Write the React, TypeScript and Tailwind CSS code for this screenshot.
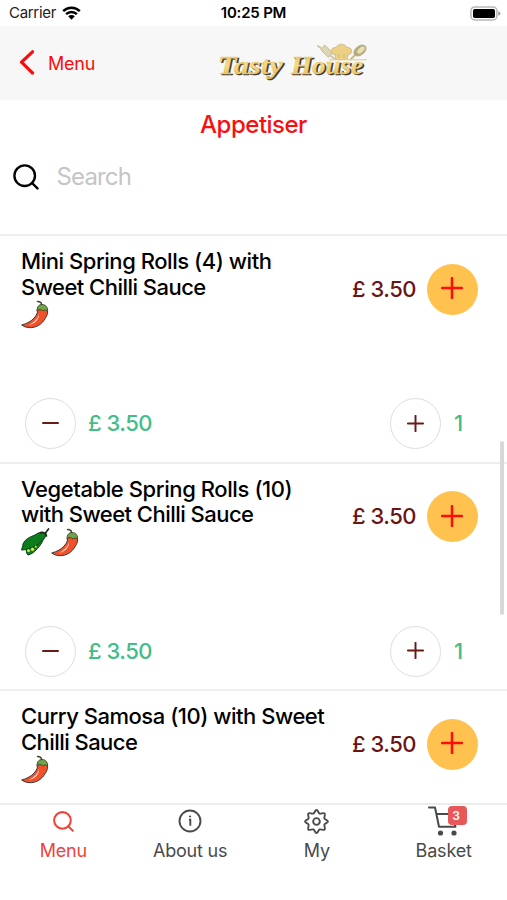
import { ReactNode } from "react";

type Dish = {
  title: string[];
  tracking: string[];
  veg: boolean;
  inBasket: boolean;
};

const dishes: Dish[] = [
  {
    title: ["Mini Spring Rolls (4) with", "Sweet Chilli Sauce"],
    tracking: ["tracking-[-0.45px]", "tracking-[-0.53px]"],
    veg: false,
    inBasket: true,
  },
  {
    title: ["Vegetable Spring Rolls (10)", "with Sweet Chilli Sauce"],
    tracking: ["tracking-[-0.41px]", "tracking-[-0.53px]"],
    veg: true,
    inBasket: true,
  },
  {
    title: ["Curry Samosa (10) with Sweet", "Chilli Sauce"],
    tracking: ["tracking-[-0.47px]", "tracking-[-0.56px]"],
    veg: false,
    inBasket: false,
  },
];

function SearchIcon({ className, strokeWidth }: { className: string; strokeWidth: number }) {
  return (
    <svg viewBox="0 0 26 26" className={className} fill="none" stroke="currentColor" strokeWidth={strokeWidth} strokeLinecap="round">
      <circle cx="11.7" cy="11.7" r="10.3" />
      <path d="M19 19l5.5 5.400" />
    </svg>
  );
}

function Wifi() {
  return (
    <svg viewBox="0 0 19 14" className="w-[19px] h-[14px]">
      <g fill="none" stroke="#000" strokeWidth="2.5">
        <path d="M1.2 5.2a11.7 11.7 0 0 1 16.6 0" />
        <path d="M4.1 8.2a7.6 7.6 0 0 1 10.8 0" />
      </g>
      <path d="M6.2 10.3a4.7 4.7 0 0 1 6.6 0L9.5 13.8z" />
    </svg>
  );
}

function Battery() {
  return (
    <svg viewBox="0 0 31 15" className="w-[31px] h-[15px]">
      <rect x="0.9" y="0.9" width="26" height="13" rx="4" fill="#fff" stroke="#b8b8b8" strokeWidth="1.5" />
      <rect x="3" y="3" width="22" height="9" rx="1.8" />
      <path d="M28.3 5.2c2.8 1 2.8 3.6 0 4.6z" fill="#999" />
    </svg>
  );
}

function Logo() {
  return (
    <svg viewBox="0 0 152 44" className="w-[152px] h-[44px]">
      <defs>
        <linearGradient id="gold" x1="0" y1="0" x2="0" y2="1">
          <stop offset="0" stopColor="#dfbc58" />
          <stop offset="0.5" stopColor="#f4da8a" />
          <stop offset="1" stopColor="#dbb655" />
        </linearGradient>
      </defs>
      {/* rolling pin, chef hat and spoon */}
      <g stroke="#b5a77a" strokeWidth="0.6">
        <path d="M104.500 7.500l5-3.500 5.500 9-5 4z" transform="rotate(-14 109 11)" fill="#ddd5b4" />
        <path d="M104 7l-3-2M114 15l3 2.500" stroke="#cfc6a0" strokeWidth="2" strokeLinecap="round" />
        <path d="M118.500 18.500v-4.500c-6-.5-5.500-8 .5-7.500 2-4.500 9-4.500 11 0 6-.5 6.500 7 .5 7.500v4.500z" fill="#ecd083" />
        <path d="M122 13v4M127 13v4" fill="none" />
        <path d="M133 19l6-6" stroke="#c9bd90" strokeWidth="2" />
        <ellipse cx="143" cy="9.500" rx="7" ry="4.500" transform="rotate(-38 143 9.500)" fill="#b8ac79" />
        <ellipse cx="144" cy="9" rx="4.500" ry="2.300" transform="rotate(-42 144 9)" fill="#e9dfb6" stroke="none" />
      </g>
      <path d="M112 18.800h38" stroke="#dccb92" strokeWidth="1" />
      <g fontFamily="'Liberation Serif', serif" fontSize="26" fontWeight="700" fontStyle="italic">
        <g aria-hidden="true" fill="#3b352b" stroke="#3b352b" strokeWidth="0.5">
          <text x="2.200" y="33.500" textLength="65" lengthAdjust="spacingAndGlyphs">
            Tasty
          </text>
          <text x="75.500" y="33.500" textLength="72" lengthAdjust="spacingAndGlyphs">
            House
          </text>
        </g>
        <g fill="url(#gold)" stroke="#ecce78" strokeWidth="0.3">
          <text x="0.8" y="32.500" textLength="65" lengthAdjust="spacingAndGlyphs">
            Tasty
          </text>
          <text x="74" y="32.500" textLength="72" lengthAdjust="spacingAndGlyphs">
            House
          </text>
        </g>
      </g>
    </svg>
  );
}

function Chilli() {
  return (
    <svg viewBox="0 0 30 30" className="w-[30px] h-[30px]" strokeLinejoin="round" strokeLinecap="round">
      <path
        d="M18 9C18 15 13 22 1.700 25c5 4 15 4 21-3 4-5 6-9 4.500-13z"
        fill="#f0512b"
        stroke="#3c3a36"
        strokeWidth="1"
      />
      <path d="M19 14c-1 4.500-5 8.500-10 11 5-1 10.500-5 10-11z" fill="#fbd9cb" />
      <path d="M17 10.500c0-4 2-6 5-6 4 0 6 3 5.500 7-2-2-3-2-4.500-.5-2-2-4-2-6-.5z" fill="#6fa447" stroke="#3c4a2c" strokeWidth="0.900" />
      <path d="M21.500 4.500c0-2-1.500-3-4-3" fill="none" stroke="#3c4a2c" strokeWidth="1.500" />
    </svg>
  );
}

function Pea() {
  return (
    <svg viewBox="0 0 30 30" className="w-[30px] h-[30px]" strokeLinejoin="round" strokeLinecap="round">
      {/* lower half of the pod */}
      <path d="M24 7c0 6-4 11-8 15-2 2-4 4-8 5-2-2-2-4-1-7z" fill="#128022" stroke="#073f10" strokeWidth="1" />
      <path d="M7 22c3-4 9-6 12-7-1 4-4 6-7 7z" fill="#07500f" />
      {/* upper half */}
      <path d="M26 6c-3-3-7-2-11 1-5 2-10 4-12 9 0 2-1 4-1.500 6 4 0 9-1 13-4 4-1 5-4 8-6 2-1 3-3 3.500-6z" fill="#0c7c1d" stroke="#073f10" strokeWidth="1" />
      <circle cx="8.500" cy="22.500" r="1.500" fill="#d4e83c" />
      <circle cx="12.500" cy="21.300" r="1.700" fill="#d4e83c" />
      <circle cx="15.800" cy="18.800" r="1.200" fill="#a6cf35" />
      <path d="M20.500 5c2-1.500 5 0 6 3M25 5.500l3.500-4.500" fill="none" stroke="#1c2a1c" strokeWidth="1.700" />
    </svg>
  );
}

function Plus({ size, className }: { size: number; className: string }) {
  return (
    <svg viewBox="0 0 20 20" width={size} height={size} className={className} stroke="currentColor" strokeLinecap="round">
      <path d="M1 10h18M10 1v18" strokeWidth="2.300" />
    </svg>
  );
}

function DishRow({ dish }: { dish: Dish }) {
  return (
    <div className="h-[227.5px] shrink-0 border-t-2 border-[#efefef] flex flex-col">
      <div className="h-[162px] shrink-0 flex pl-[21px] pr-[29px]">
        <div className="flex-1 pt-[13px]">
          {dish.title.map((line, i) => (
            <div key={line} className={`text-[22px] leading-[25.500px] font-medium text-black whitespace-nowrap ${dish.tracking[i]}`}>
              {line}
            </div>
          ))}
          <div className="flex -ml-px">
            {dish.veg && <Pea />}
            <Chilli />
          </div>
        </div>
        <div className="flex items-center h-[51px] mt-[27.500px]">
          <span className="text-[22px] font-medium tracking-[-0.5px] text-[#6b1414] mr-[11px]">£ 3.50</span>
          <button className="size-[51px] rounded-full bg-[#ffc24f] flex items-center justify-center pb-[2px] pr-px">
            <Plus size={22} className="text-[#ff0d0d]" />
          </button>
        </div>
      </div>
      {dish.inBasket && (
        <div className="flex items-center h-[51px] pl-[25px] pr-[42px] text-[22px] font-medium text-[#42bd86]">
          <button className="size-[51px] rounded-full border border-[#dedede] flex items-center justify-center pr-px pb-px">
            <span className="w-[17px] h-[2px] bg-[#6b1a1a] rounded-full" />
          </button>
          <span className="ml-[12px] tracking-[-0.5px]">£ 3.50</span>
          <button className="ml-auto size-[51px] rounded-full border border-[#dedede] flex items-center justify-center pr-px pb-px">
            <Plus size={17} className="text-[#6b1a1a]" />
          </button>
          <span className="w-6 pl-[13px]">1</span>
        </div>
      )}
    </div>
  );
}

function Tab({ label, active, children }: { label: string; active?: boolean; children: ReactNode }) {
  return (
    <div className={`flex-1 flex flex-col items-center ${active ? "text-[#ee4338]" : "text-[#4a4a4a]"}`}>
      <div className="h-[32px] flex items-center justify-center">{children}</div>
      <span className="mt-[2px] text-[18px] leading-[24px] tracking-[-0.2px]">{label}</span>
    </div>
  );
}

export default function App() {
  return (
    <div className="relative w-[507px] h-[900px] overflow-hidden bg-white flex flex-col font-['Inter','Liberation_Sans',sans-serif]">
      {/* Status bar */}
      <div className="h-[26px] shrink-0 grid grid-cols-3 items-center">
        <div className="flex items-center gap-[6px] pl-[9px] text-[15px] tracking-[-0.3px] text-[#222]">
          Carrier <Wifi />
        </div>
        <div className="text-center text-[15px] font-semibold tracking-[-0.2px] text-black">10:25 PM</div>
        <div className="flex justify-end pr-[6px]">
          <Battery />
        </div>
      </div>

      {/* Nav header */}
      <header className="h-[74px] shrink-0 bg-[#f7f7f7] grid grid-cols-[217px_152px_1fr] items-center">
        <div className="flex items-center pl-[19px] text-[#fb0d0d]">
          <svg viewBox="0 0 16 26" className="w-4 h-[26px]" fill="none" stroke="currentColor" strokeWidth="3.200" strokeLinecap="round" strokeLinejoin="round">
            <path d="M13.500 1.800L2.500 12.200 13.500 23" />
          </svg>
          <span className="ml-[13px] text-[18px] tracking-[-0.25px]">Menu</span>
        </div>
        <Logo />
      </header>

      <h1 className="h-[50px] shrink-0 text-center text-[24px] leading-[50px] font-medium tracking-[-0.5px] text-[#fa0f0f]">Appetiser</h1>

      {/* Search */}
      <div className="h-[84px] shrink-0 flex items-start pl-[12.500px] pt-[10px]">
        <div className="flex items-center h-[34px]">
          <SearchIcon className="w-[26px] h-[26px] text-black" strokeWidth={2.4} />
          <span className="ml-[18px] text-[24px] tracking-[-0.85px] text-[#c5c5c5]">Search</span>
        </div>
      </div>

      <main className="h-[569px] shrink-0 overflow-hidden flex flex-col">
        {dishes.map((dish) => (
          <DishRow key={dish.title[0]} dish={dish} />
        ))}
      </main>
      {/* scroll indicator */}
      <div className="absolute right-[3px] top-[441px] w-1 h-[174px] rounded-full bg-[#d8d8d8]" />

      {/* Tab bar */}
      <nav className="flex-1 border-t-2 border-[#ececec] bg-white flex">
        <Tab label="Menu" active>
          <SearchIcon className="w-[21px] h-[21px]" strokeWidth={2.5} />
        </Tab>
        <Tab label="About us">
          <svg viewBox="0 0 24 24" className="size-6" fill="none" stroke="currentColor" strokeWidth="1.900">
            <circle cx="12" cy="12" r="10.500" />
            <path d="M11 10.700h1.300v6" />
            <circle cx="12.100" cy="7.500" r="1.100" fill="currentColor" stroke="none" />
          </svg>
        </Tab>
        <Tab label="My">
          <svg viewBox="0 0 24 24" className="size-[25px]" fill="none" stroke="currentColor" strokeWidth="1.800" strokeLinejoin="round">
            <circle cx="12" cy="12" r="3.200" />
            <path d="M12 1c1.500 0 1.600 2.800 3 3.400s3.700-1.300 4.800-.2-.8 3.400-.2 4.800S23 10.500 23 12s-2.800 1.600-3.400 3 1.300 3.700.2 4.800-3.400-.8-4.800-.2S13.500 23 12 23s-1.600-2.800-3-3.400-3.700 1.300-4.800.2.800-3.400.2-4.800S1 13.500 1 12s2.800-1.600 3.400-3-1.300-3.700-.2-4.800 3.400.8 4.800.2S10.500 1 12 1z" />
          </svg>
        </Tab>
        <Tab label="Basket">
          <div className="relative w-[31px] h-[30px]">
            <svg viewBox="0 0 31 30" className="w-[31px] h-[30px]" fill="none" stroke="currentColor" strokeWidth="2" strokeLinecap="round" strokeLinejoin="round">
              <path d="M1 1.500h6l4 19.300h16.500M8.300 8h21l-2.500 12.800" />
              <circle cx="12.500" cy="27" r="1.600" fill="currentColor" />
              <circle cx="26" cy="27" r="1.600" fill="currentColor" />
            </svg>
            <span className="absolute left-[20px] top-0 w-[19px] h-[19px] rounded-[4px] bg-[#e95858] text-white text-[12px] leading-[19px] text-center font-semibold pr-[3px]">
              3
            </span>
          </div>
        </Tab>
      </nav>
    </div>
  );
}
